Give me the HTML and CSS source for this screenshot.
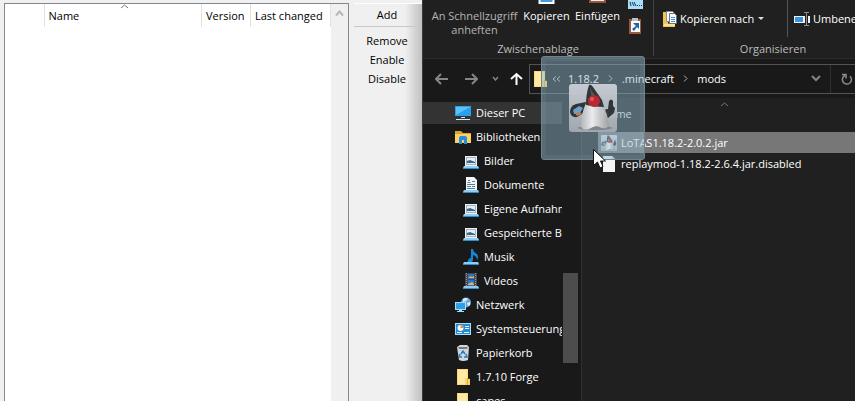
FILE: index.html
```
<!DOCTYPE html>
<html lang="de">
<head>
<meta charset="utf-8">
<title>mods</title>
<link rel="stylesheet" href="styles.css">
</head>
<body>
<svg class="defs" width="0" height="0" aria-hidden="true">
  <defs>
    <linearGradient id="tile" x1="0" y1="0" x2="0" y2="1"><stop offset="0" stop-color="#d3d7de"/><stop offset="1" stop-color="#a9aeb6"/></linearGradient>
    <linearGradient id="belly" x1="0" y1="0" x2="1" y2="0"><stop offset="0" stop-color="#bfc0c2"/><stop offset=".4" stop-color="#fafafa"/><stop offset="1" stop-color="#a6a7a9"/></linearGradient>
    <symbol id="folder" viewBox="0 0 16 16"><path fill="#ffd978" d="M2 0h11v16H2z"/><path fill="#ffe9a3" d="M3 1h9v14H3z"/><path fill="#fbd370" d="M10 9l5 1v6h-5z"/><path fill="#e2ad45" d="M12 9h1v7h-1z"/></symbol>
    <symbol id="picture" viewBox="0 0 16 16"><path fill="#eef3f7" d="M2 3h12v10H2z"/><path fill="#a3b1bc" d="M3 4h10v8H3z"/><path fill="#e1f0fb" d="M4 5h8v6H4z"/><path fill="#3c6685" d="M4 8l3-1 5 2v1H4z"/><path fill="#8ccdf5" d="M1 13h14l1 2H0z"/><path fill="#378bc4" d="M0 15h16v1H0z"/></symbol>
    <symbol id="duke" viewBox="0 0 48 48"><rect width="48" height="48" rx="3" fill="url(#tile)"/><ellipse cx="26" cy="44" rx="17" ry="2" fill="#85898f"/><path fill="#2c3034" d="M1 28q0-6 6-8l10-2 2 7-6 5-5 3q-6 1-7-5z"/><path fill="#6fa9cf" d="M4 26l6-4 4 2-3 5-6 1z"/><path fill="#c98055" d="M6 29l5-1 2 2-5 2z"/><path fill="#2c3034" d="M34 26l5-1 1-8q2-3 4 0v5l2 2-1 5-6 5-4-3z"/><path fill="url(#belly)" d="M17 19q9-4 17 1 4 9 6 20 0 5-7 4l-5-2-4 1-4 2q-7 2-8-3 0-12 5-23z"/><path fill="#2f3134" d="M20 1q2-1 4 2l9 13 2 7q-9 0-18-2 0-11 3-20z"/><path fill="#55585b" d="M21 4l5 8-3 3z"/><circle cx="25" cy="17" r="6" fill="#c8222b"/><circle cx="23" cy="15" r="2" fill="#e75d5e"/></symbol>
  </defs>
</svg>
<main class="desktop">
  <section class="manager">
    <div class="list">
      <table>
        <colgroup><col class="c-icon"><col><col class="c-version"><col class="c-changed"></colgroup>
        <thead><tr><th></th><th>Name<svg class="sort" viewBox="0 0 9 5"><path d="M1 4l3.500-3L8 4"/></svg></th><th>Version</th><th>Last changed</th></tr></thead>
      </table>
      <div class="list-scroll"><svg viewBox="0 0 9 7"><path d="M1 5.500l3.500-4 3.500 4"/></svg></div>
    </div>
    <div class="actions">
      <button class="add">Add</button>
      <button>Remove</button>
      <button>Enable</button>
      <button>Disable</button>
    </div>
  </section>
  <section class="explorer">
    <div class="ribbon">
      <div class="group clipboard">
        <div class="tools">
          <button class="tall pin">An Schnellzugriff<br>anheften</button>
          <button class="tall"><svg class="top-icon" viewBox="0 0 16 4"><path fill="#fff" d="M0 0h16v4H0z"/><path fill="#3f9be8" d="M2 0h12v2H2z"/></svg>Kopieren</button>
          <button class="tall"><svg class="top-icon" viewBox="0 0 18 4"><path fill="#965336" d="M0 0h18v3H0z"/><path fill="#fff" d="M2 0h14v1H2z"/></svg>Einfügen</button>
          <div class="mini">
            <button aria-label="Pfad kopieren"><svg width="15" height="9" viewBox="0 0 15 9"><path fill="#a9ddf8" d="M0 0h15v9H0z"/><path d="M2 2l1 4M4 2l2 4M6 2l2 4" stroke="#17395b" fill="none"/><path fill="#17395b" d="M9 5h1v1H9zM11 5h1v1h-1zM13 5h1v1h-1z"/></svg></button>
            <button aria-label="Verknüpfung einfügen"><svg width="14" height="16" viewBox="0 0 14 16"><path fill="#9a5a3d" d="M1 1h12v15H1z"/><path fill="#f7f9fb" d="M3 3h9v11H3z"/><path fill="#bac1c8" d="M4 0h6v3H4z"/><path fill="#2263a5" d="M5 5h6v6L9 9l-3 4-2-2 4-3z"/></svg></button>
          </div>
        </div>
        <div class="caption">Zwischenablage</div>
      </div>
      <div class="group organise">
        <div class="tools">
          <button class="wide copyto"><svg width="16" height="18" viewBox="0 0 16 18"><path fill="#f3c64e" d="M1 2h5v12h7v3H1z"/><path fill="#ffe190" d="M2 14l11-1v3H2z"/><path fill="#fff" stroke="#8b9399" d="M4.500 1.500h6l2 2v8h-8z"/><path fill="#fff" stroke="#68737c" d="M7.500 3.500h5l2 2v8h-7z"/><path stroke="#3d91da" d="M9 7.500h4M9 9.500h4M9 11.500h4"/></svg>Kopieren nach<svg class="caret" viewBox="0 0 6 3"><path fill="#ddd" d="M0 0h6L3 3z"/></svg></button>
          <button class="wide rename"><svg width="16" height="14" viewBox="0 0 16 14"><path fill="#f2f2f2" d="M0 4h16v7H0z"/><path fill="#3994df" d="M1 5h8v5H1z"/><path fill="#202020" d="M11 3h3v9h-3z"/><path d="M12.500 1v12M10 .5h5M10 13.500h5" fill="none" stroke="#8e8e8e"/></svg>Umbenennen</button>
        </div>
        <div class="caption">Organisieren</div>
      </div>
    </div>
    <div class="navbar">
      <button aria-label="Zurück"><svg width="13" height="12" viewBox="0 0 13 12"><path d="M13 6H1M6 1L1 6l5 5" stroke="#858585" stroke-width="2" fill="none"/></svg></button>
      <button aria-label="Vorwärts"><svg width="13" height="12" viewBox="0 0 13 12"><path d="M0 6h12M7 1l5 5-5 5" stroke="#858585" stroke-width="2" fill="none"/></svg></button>
      <button class="recent" aria-label="Zuletzt"><svg width="7" height="5" viewBox="0 0 7 5"><path d="M1 1l2.500 3L6 1" stroke="#858585" stroke-width="1.500" fill="none"/></svg></button>
      <button class="up" aria-label="Nach oben"><svg width="13" height="13" viewBox="0 0 13 13"><path d="M6.500 13V2M1 7l5.500-5L12 7" stroke="#fff" stroke-width="2" fill="none"/></svg></button>
      <nav class="address">
        <svg class="ico" viewBox="0 0 16 16"><use href="#folder"/></svg>
        <svg class="dbl" viewBox="0 0 9 6"><path d="M4 .5L1 3l3 2.500M8 .5L5 3l3 2.500"/></svg>
        <a href="#">1.18.2</a>
        <svg class="chev" viewBox="0 0 5 7"><path d="M1 .5l3 3-3 3"/></svg>
        <a href="#">.minecraft</a>
        <svg class="chev" viewBox="0 0 5 7"><path d="M1 .5l3 3-3 3"/></svg>
        <a href="#">mods</a>
        <button class="drop" aria-label="Verlauf"><svg width="10" height="7" viewBox="0 0 10 7"><path d="M1 1l4 4 4-4" stroke="#858585" stroke-width="2" fill="none"/></svg></button>
        <button class="reload" aria-label="Aktualisieren"><svg width="12" height="12" viewBox="0 0 12 12"><path d="M4 2.500a4.500 4.500 0 1 0 5 .8M1 1.500h4v4" stroke="#8a8a8a" stroke-width="1.500" fill="none"/></svg></button>
      </nav>
    </div>
    <div class="body">
      <aside class="tree">
        <ul>
          <li class="on"><svg class="ico" viewBox="0 0 16 16"><path fill="#2b9fe8" d="M0 1h16v10H0z"/><path fill="#5cc2f8" d="M1 2h14L1 10z"/><path fill="#d3edfb" d="M6 12h4v1H6zM1 14h14v1H1z"/></svg>Dieser PC</li>
          <li><svg class="ico" viewBox="0 0 16 16"><path fill="#dda032" d="M0 2h6l2 2h8v3H0z"/><path fill="#ffd163" d="M0 5h16v9H0z"/><path fill="#278ddd" d="M4 15V9q0-2 2-2h4q2 0 2 2v6h-3v-4H7v4z"/></svg>Bibliotheken</li>
          <li class="sub"><svg class="ico" viewBox="0 0 16 16"><use href="#picture"/></svg>Bilder</li>
          <li class="sub"><svg class="ico" viewBox="0 0 16 16"><path fill="#f3f6f8" d="M3 0h8l3 3v10H3z"/><path stroke="#56809e" d="M4.500 5.500h3M9 4.500h3M4 7.500h8M4 9.500h4M9 9.500h3M4 11.500h8M5 3.500h2"/><path fill="#8ccdf5" d="M1 13h14l1 2H0z"/><path fill="#378bc4" d="M0 15h16v1H0z"/></svg>Dokumente</li>
          <li class="sub"><svg class="ico" viewBox="0 0 16 16"><use href="#picture"/></svg>Eigene Aufnahmen</li>
          <li class="sub"><svg class="ico" viewBox="0 0 16 16"><use href="#picture"/></svg>Gespeicherte Bilder</li>
          <li class="sub"><svg class="ico" viewBox="0 0 16 16"><path fill="#1686da" d="M8 0h2q0 3 4 5 2 3 0 6 0-4-4-5v5q-1 3-4 3-2-1-1-3 1-2 3-2z"/><path fill="#8ccdf5" d="M1 13h14l1 2H0z"/><path fill="#378bc4" d="M0 15h16v1H0z"/></svg>Musik</li>
          <li class="sub"><svg class="ico" viewBox="0 0 16 16"><path fill="#45494e" d="M2 0h12v14H2z"/><path stroke="#92969b" stroke-dasharray="1 1" d="M3.500 0v13M12.500 0v13"/><path fill="#2473d8" d="M5 1h6v5H5zM5 7h6v6H5z"/><path fill="#f0b044" d="M5 5l3-2 1 1 2-1v2H5zM5 11l4-2 2 2v1H5z"/><path fill="#8ccdf5" d="M1 13h14l1 2H0z"/><path fill="#378bc4" d="M0 15h16v1H0z"/></svg>Videos</li>
          <li><svg class="ico" viewBox="0 0 16 16"><circle cx="11" cy="5.500" r="5" fill="#6aa9d2"/><path fill="#d6ecf8" d="M8 2q3-2 5 0l-2 2-3 1zM12 6l3-1v3l-2 1z"/><path fill="#a9dcf8" d="M0 5h11v8H0z"/><path fill="#2b9fe8" d="M1 6h9v6H1z"/><path fill="#a9dcf8" d="M4 13h3v1h2v1H2v-1h2z"/></svg>Netzwerk</li>
          <li><svg class="ico" viewBox="0 0 16 16"><path fill="#a6dcf8" d="M0 2h16v12H0z"/><path fill="#278bd2" d="M1 3h14v10H1z"/><circle cx="5.500" cy="7" r="3" fill="#fff"/><path fill="#f08d30" d="M5.500 7V4a3 3 0 0 1 3 3z"/><path stroke="#e8f7ff" d="M10 5.500h4M10 7.500h4M2 11.500h5M9 11.500h5"/></svg>Systemsteuerung</li>
          <li><svg class="ico" viewBox="0 0 16 16"><path fill="#d4d7da" d="M2 2l3-2h7l2 2-1 13q-5 2-9 0z"/><path fill="#777d82" d="M3 2h10l-1 2H4z"/><path d="M6 9l2-3 2 3M5 9l-1 3h3M11 9l1 3H9" fill="none" stroke="#267bc1" stroke-width="1.500"/></svg>Papierkorb</li>
          <li><svg class="ico" viewBox="0 0 16 16"><use href="#folder"/></svg>1.7.10 Forge</li>
          <li><svg class="ico" viewBox="0 0 16 16"><use href="#folder"/></svg>capes</li>
        </ul>
        <div class="track"><div class="thumb"></div></div>
      </aside>
      <div class="files">
        <div class="head"><svg class="sort" viewBox="0 0 9 5"><path d="M1 4l3.500-3L8 4"/></svg><span>Name</span></div>
        <div class="file on"><svg class="ico" viewBox="0 0 48 48"><use href="#duke"/></svg>LoTAS1.18.2-2.0.2.jar</div>
        <div class="file"><svg class="ico" viewBox="0 0 16 16"><path fill="#f4f4f4" d="M2 0h9l3 3v13H2z"/><path fill="#bfc3c6" d="M11 0l3 3h-3z"/></svg>replaymod-1.18.2-2.6.4.jar.disabled</div>
      </div>
    </div>
  </section>
  <div class="drag"><svg width="48" height="48" viewBox="0 0 48 48"><use href="#duke"/></svg></div>
  <svg class="pointer" width="13" height="20" viewBox="0 0 13 20"><path fill="#fff" stroke="#111" d="M.5.5v16l4-3.500 2.500 6 3-1.500-2.500-5.500h5z"/></svg>
</main>
</body>
</html>
```
FILE: styles.css
```
* { box-sizing: border-box; }
body { margin: 0; font: 11px/16px "Open Sans", "Noto Sans", sans-serif; }
button { margin: 0; padding: 0; border: 0; background: none; color: inherit; font: inherit; }
svg { display: block; flex: none; }
.defs { position: absolute; }
.ico { width: 16px; height: 16px; }
.desktop { position: relative; display: grid; grid-template-columns: 422px minmax(0, 1fr); height: 100vh; overflow: hidden; }

.manager { display: flex; gap: 5px; padding: 3px 0 0 4px; background: #f0f0f0; color: #000; }
.list { flex: 1; display: flex; border: 1px solid #828790; border-bottom: 0; background: #fff; }
.list table { flex: 1; table-layout: fixed; border-collapse: collapse; align-self: flex-start; }
.c-icon { width: 39px; }
.c-version { width: 49px; }
.c-changed { width: 80px; }
th { position: relative; height: 23px; padding: 0 0 0 4px; border-right: 1px solid #e2e2e2; font-weight: 400; text-align: left; white-space: nowrap; }
.sort { width: 9px; height: 5px; }
.sort path { fill: none; stroke: #777; }
th .sort { position: absolute; top: 0; left: 48%; }
.list-scroll { width: 17px; padding: 6px 4px; background: #f0f0f0; }
.list-scroll svg { width: 9px; height: 7px; }
.list-scroll path { fill: none; stroke: #b6b6b6; stroke-width: 2; }
.actions { flex: 0 0 68px; display: flex; flex-direction: column; background: linear-gradient(90deg, #f0f0f0 75%, #c0c0c0); }
.actions button { height: 19px; padding-right: 2px; }
.actions .add { height: 24px; margin-bottom: 4px; border-top: 1px solid #fff; border-bottom: 1px solid #c8c8c8; }

.explorer { display: flex; flex-direction: column; min-width: 0; overflow: hidden; border-left: 1px solid #3a3a3a; background: #191919; color: #fff; }
.ribbon { display: flex; flex: none; height: 59px; border-bottom: 1px solid #2b2b2b; background: #202020; }
.group { display: flex; flex: none; flex-direction: column; justify-content: space-between; height: 56px; border-right: 1px solid #444; }
.clipboard { width: 231px; }
.organise { width: 239px; }
.tools { display: flex; height: 37px; }
.caption { color: #bdbdbd; line-height: 15px; text-align: center; }
.tall { position: relative; display: flex; align-items: flex-start; justify-content: center; width: 51px; padding-top: 9px; line-height: 14px; text-align: center; white-space: nowrap; }
.pin { width: 98px; padding-left: 5px; color: #b5b5b5; }
.top-icon { position: absolute; top: 0; left: 17px; width: 17px; height: 4px; }
.mini { display: flex; flex-direction: column; gap: 9px; margin-left: 5px; }
.wide { display: flex; align-items: center; gap: 2px; height: 37px; white-space: nowrap; }
.copyto { width: 134px; padding-left: 8px; border-right: 1px solid #555; }
.caret { width: 6px; height: 3px; margin-left: 2px; }
.rename { padding-left: 6px; gap: 3px; }

.navbar { display: flex; flex: none; align-items: center; height: 39px; padding-left: 12px; }
.navbar > button { width: 30px; }
.navbar > .recent { width: 11px; margin-left: -3px; }
.navbar > .up { width: 13px; margin: 0 6px 0 7px; }
.address { display: flex; flex: 1; align-items: center; height: 30px; min-width: 0; padding-left: 2px; border: 1px solid #535353; border-right: 0; }
.address a { color: #fff; font-size: 11px; text-decoration: none; }
.dbl { width: 9px; height: 6px; margin: 0 7px 0 4px; }
.chev { width: 5px; height: 7px; margin: 0 9px; }
.dbl path, .chev path { fill: none; stroke: #b0b0b0; }
.drop { margin-left: auto; padding-right: 9px; }
.reload { align-self: stretch; width: 25px; padding-left: 10px; border-left: 1px solid #2e2e2e; }

.body { display: flex; flex: 1; min-height: 0; }
.tree { display: flex; width: 159px; padding-top: 3px; border-right: 1px solid #303030; }
.tree ul { flex: 1; min-width: 0; margin: 0; padding: 0; list-style: none; }
.tree li { display: flex; align-items: center; gap: 5px; height: 24px; padding-left: 32px; overflow: hidden; white-space: nowrap; }
.tree .sub { padding-left: 40px; }
.tree .on { background: linear-gradient(#333, #333) center / 100% 22px no-repeat; }
.track { width: 19px; padding-top: 172px; }
.thumb { width: 15px; height: 90px; margin-left: 1px; background: #4d4d4d; }
.files { flex: 1; min-width: 0; background: #202020; }
.head { height: 34px; padding: 4px 0 0 19px; color: #dedede; }
.head .sort { margin-left: 119px; }
.head span { display: block; line-height: 14px; }
.file { display: flex; align-items: center; gap: 4px; height: 21px; margin-left: 16px; padding-left: 3px; white-space: nowrap; }
.file.on { background: #777; }

.drag { position: absolute; left: 541px; top: 56px; display: grid; place-items: center; width: 104px; height: 104px; border: 1px solid #70838c; border-radius: 3px; background: rgba(150, 190, 212, .45); box-shadow: inset 0 0 0 4px rgba(145, 170, 182, .12); }
.drag svg { opacity: .9; }
.pointer { position: absolute; left: 593px; top: 149px; }
```
